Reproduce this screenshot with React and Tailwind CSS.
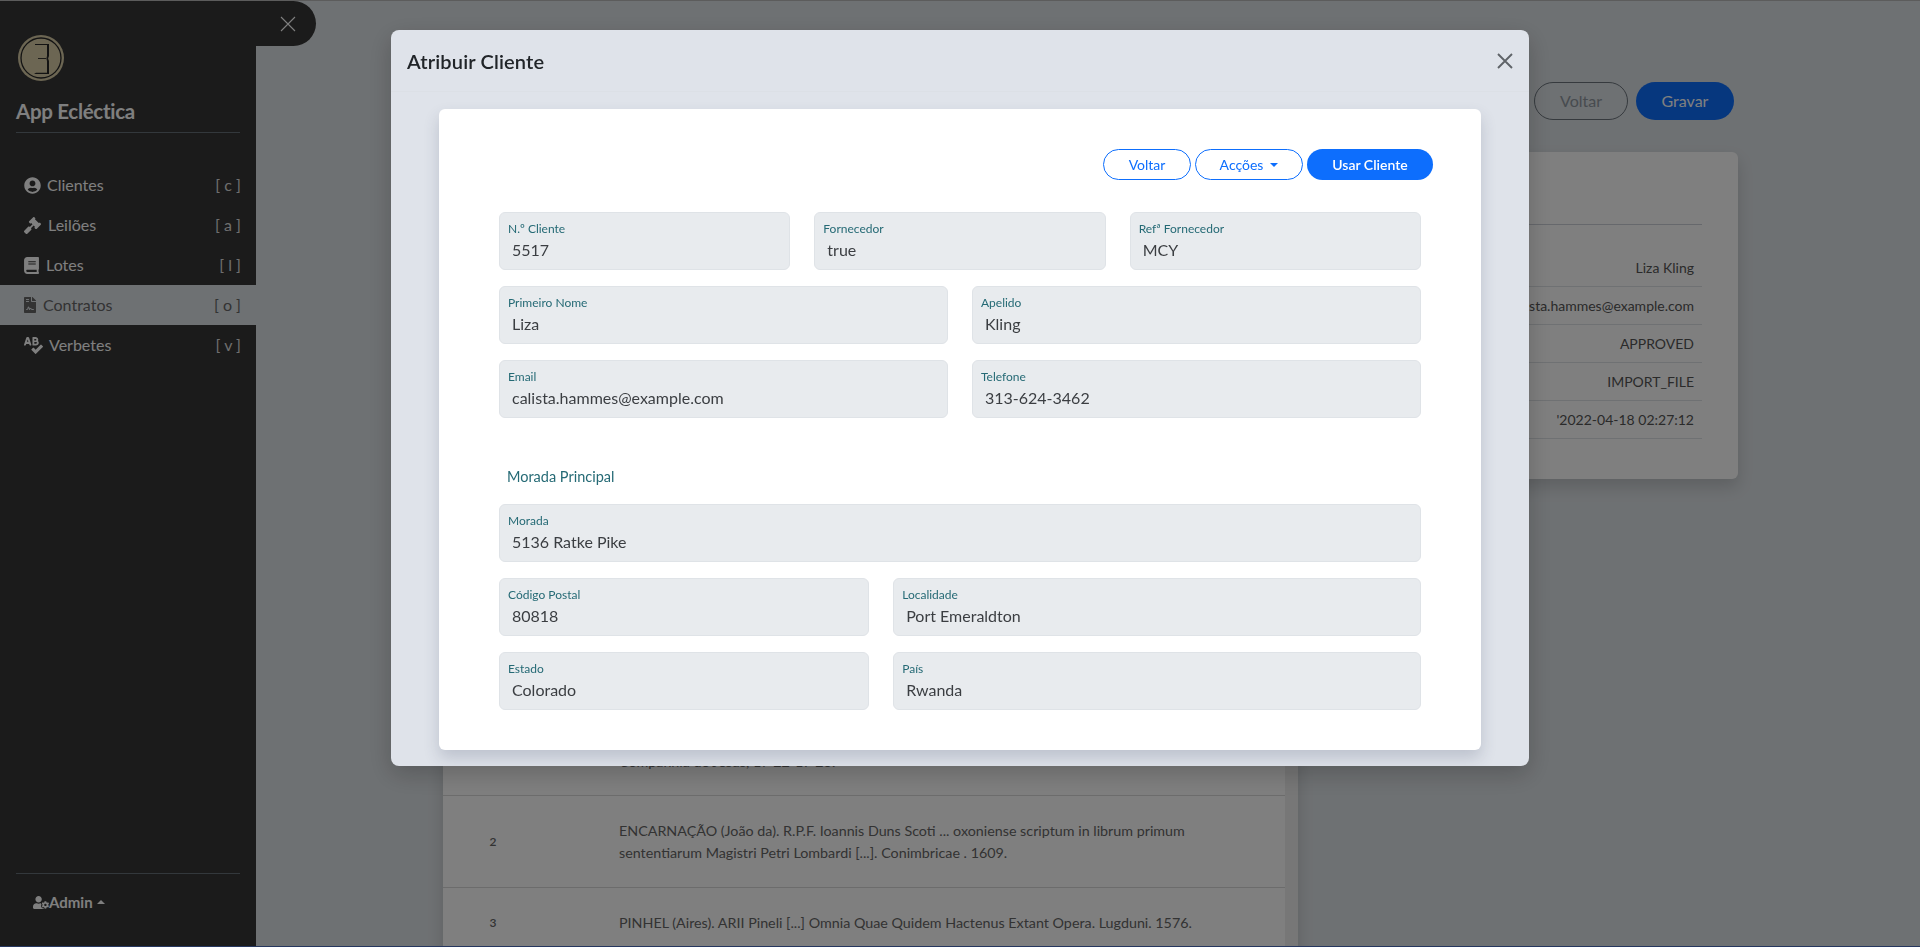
import { FaUserCircle, FaGavel, FaBook, FaFileContract, FaSpellCheck, FaUserCog } from "react-icons/fa";

const navItems = [
  { label: "Clientes", key: "c", Icon: FaUserCircle, iconClass: "w-[17px] h-[17px] mr-[6px]" },
  { label: "Leilões", key: "a", Icon: FaGavel, iconClass: "w-[17px] h-[17px] mr-[7px]" },
  { label: "Lotes", key: "l", Icon: FaBook, iconClass: "w-[15px] h-[17px] mr-[7px]" },
  { label: "Contratos", key: "o", Icon: FaFileContract, iconClass: "w-[12px] h-[16px] mr-[7px]", active: true },
  { label: "Verbetes", key: "v", Icon: FaSpellCheck, iconClass: "w-[19px] h-[17px] mr-[6px]" },
];

const rows = [
  { n: 2, text: "ENCARNAÇÃO (João da). R.P.F. Ioannis Duns Scoti ... oxoniense scriptum in librum primum sententiarum Magistri Petri Lombardi [...]. Conimbricae . 1609." },
  { n: 3, text: "PINHEL (Aires). ARII Pineli [...] Omnia Quae Quidem Hactenus Extant Opera. Lugduni. 1576." },
];

const summary = ["Liza Kling", "calista.hammes@example.com", "APPROVED", "IMPORT_FILE", "'2022-04-18 02:27:12"];

function Logo() {
  return (
    <svg viewBox="0 0 46 46" className="w-[46px] h-[46px]">
      <circle cx="23" cy="23" r="23" fill="#d8cca6" />
      <circle cx="23" cy="23" r="20" fill="none" stroke="#262626" strokeWidth="1.3" />
      <path d="M17 9h14v12l-.9 2.5.9 2.5v13H16l2-1.2h11V26l-.6-2.5.6-2.5V10H17z" fill="#262626" />
      <path d="M20 23.1h8v.9h-8z" fill="#262626" />
    </svg>
  );
}

function Sidebar() {
  return (
    <aside className="w-[256px] shrink-0 bg-[#363636] flex flex-col text-white">
      <div className="pt-[34px] pl-[18px]">
        <Logo />
      </div>
      <div className="mx-4 mt-[18px] h-[34px] border-b border-[#667078] text-[20.5px] leading-[24px] font-bold tracking-[-0.3px]">
        App Ecléctica
      </div>
      <nav className="mt-[32px]">
        {navItems.map(({ label, key, Icon, iconClass, active }) => (
          <div
            key={label}
            className={`h-10 pl-6 pr-[15px] flex items-center text-[16px] ${active ? "bg-[#dde2e6] text-[#666666]" : "text-white"}`}
          >
            <Icon className={iconClass} />
            <span>{label}</span>
            <span className={`ml-auto ${active ? "text-[#666666]" : "text-[#dddddd]"}`}>[ {key} ]</span>
          </div>
        ))}
      </nav>
      <div className="mt-auto mx-4 h-[73px] border-t border-[#667078] pl-[17px] pt-[17px] flex items-start">
        <div className="flex items-center text-[15px] leading-[22px] font-bold">
          <FaUserCog className="w-[16px] h-[13px]" />
          <span>Admin</span>
          <span className="ml-[4px] border-x-[4px] border-x-transparent border-b-[4px] border-b-white" />
        </div>
      </div>
    </aside>
  );
}

function Page() {
  return (
    <main className="flex-1 min-w-0 bg-[#dde2e6] pt-[81px] pl-[187px] pr-[182px] overflow-hidden">
      <div className="flex justify-end gap-2 pr-1 h-[38px] mb-8 text-[16px]">
        <button className="w-[94px] rounded-full border border-[#6c757d] text-[#8f979f]">Voltar</button>
        <button className="w-[98px] rounded-full bg-[#0d6efd] text-white">Gravar</button>
      </div>
      <div className="flex gap-6 items-start">
        <section className="flex-1 min-w-0 h-[900px] bg-white rounded-md shadow-[0_8px_16px_rgba(0,0,0,0.15)] overflow-hidden flex">
          <div className="flex-1 min-w-0">
            <div className="h-[530px]" />
            <div className="h-[114px] border-y border-[#d8d8d8] pl-[176px] pt-[68px] text-[14.3px] leading-[22px] text-[#666666]">
              Companhia de Jesus, 17 22-17 23.
            </div>
            {rows.map((r) => (
              <div key={r.n} className="flex items-center pt-6 pb-[23px] border-b border-[#d8d8d8] text-[14.3px] leading-[22px] text-[#666666]">
                <div className="w-[100px] text-center text-[12px] font-semibold">{r.n}</div>
                <p className="ml-[76px] w-[620px]">{r.text}</p>
              </div>
            ))}
          </div>
          <div className="w-[13px] bg-[#eeeeee]" />
        </section>
        <section className="w-[416px] h-[327px] bg-white rounded-md shadow-[0_8px_16px_rgba(0,0,0,0.15)] px-9">
          <div className="h-[73px] border-b border-[#ccd0d8]" />
          <div className="mt-6 text-[14px] text-[#555555]">
            {summary.map((v) => (
              <div key={v} className="h-[38px] pr-2 border-b border-[#dee2e6] flex items-center justify-end">
                {v}
              </div>
            ))}
          </div>
        </section>
      </div>
    </main>
  );
}

function Field({ label, value, className = "" }) {
  return (
    <div className={`h-[58px] bg-[#e8ebee] border border-[#dfe3e7] rounded-md pl-[8px] pt-[7px] ${className}`}>
      <div className="text-[12px] leading-[18px] text-[#256a75]">{label}</div>
      <div className="pl-[4px] text-[16px] leading-[24px] text-[#3b3e42]">{value}</div>
    </div>
  );
}

function Modal() {
  return (
    <div className="w-[1138px] h-[736px] bg-[#dfe3ea] rounded-lg shadow-[0_8px_24px_rgba(0,0,0,0.2)] overflow-hidden">
      <header className="h-[62px] border-b border-[#dce0e6] pl-4 pr-4 flex items-center justify-between">
        <h2 className="text-[20px] font-semibold tracking-[0.15px] text-[#212529]">Atribuir Cliente</h2>
        <svg viewBox="0 0 16 16" className="w-4 h-4 mr-0 text-[#5f6368]">
          <path d="M1 1l14 14M15 1L1 15" stroke="currentColor" strokeWidth="1.9" fill="none" />
        </svg>
      </header>
      <div className="pt-[17px] px-12">
        <div className="h-[641px] bg-white rounded-md shadow-[0_8px_16px_rgba(50,60,90,0.2)] pt-10 px-[60px]">
          <div className="flex justify-end gap-1 h-[31px] -mr-3 text-[14px]">
            <button className="w-[88px] rounded-full border border-[#0d6efd] text-[#0d6efd]">Voltar</button>
            <button className="w-[108px] rounded-full border border-[#0d6efd] text-[#0d6efd] flex items-center justify-center gap-[7px]">
              Acções
              <span className="border-x-[4px] border-x-transparent border-t-[4px] border-t-[#0d6efd]" />
            </button>
            <button className="w-[126px] rounded-full bg-[#0d6efd] text-white font-semibold">Usar Cliente</button>
          </div>
          <div className="mt-8 grid grid-cols-12 gap-x-6 gap-y-4">
            <Field className="col-span-4" label="N.º Cliente" value="5517" />
            <Field className="col-span-4" label="Fornecedor" value="true" />
            <Field className="col-span-4" label="Refª Fornecedor" value="MCY" />
            <Field className="col-span-6" label="Primeiro Nome" value="Liza" />
            <Field className="col-span-6" label="Apelido" value="Kling" />
            <Field className="col-span-6" label="Email" value="calista.hammes@example.com" />
            <Field className="col-span-6" label="Telefone" value="313-624-3462" />
          </div>
          <div className="mt-[48px] mb-[16px] pl-2 text-[14.5px] leading-[22px] text-[#256a75]">Morada Principal</div>
          <div className="grid grid-cols-12 gap-x-6 gap-y-4">
            <Field className="col-span-12" label="Morada" value="5136 Ratke Pike" />
            <Field className="col-span-5" label="Código Postal" value="80818" />
            <Field className="col-span-7" label="Localidade" value="Port Emeraldton" />
            <Field className="col-span-5" label="Estado" value="Colorado" />
            <Field className="col-span-7" label="País" value="Rwanda" />
          </div>
        </div>
      </div>
    </div>
  );
}

export default function App() {
  return (
    <div className="relative h-screen flex overflow-hidden border-t border-t-[#b8b8b8] border-b border-b-[#4c6ebe] font-['Lato',sans-serif]">
      <Sidebar />
      <Page />
      <button className="absolute top-0 left-[256px] w-[60px] h-[45px] bg-[#363636] rounded-r-full flex items-center pl-6 text-white">
        <svg viewBox="0 0 16 16" className="w-4 h-4">
          <path d="M1 1l14 14M15 1L1 15" stroke="currentColor" strokeWidth="1.1" fill="none" />
        </svg>
      </button>
      <div className="fixed inset-0 z-10 bg-black/50 flex justify-center pt-[30px]">
        <Modal />
      </div>
    </div>
  );
}
